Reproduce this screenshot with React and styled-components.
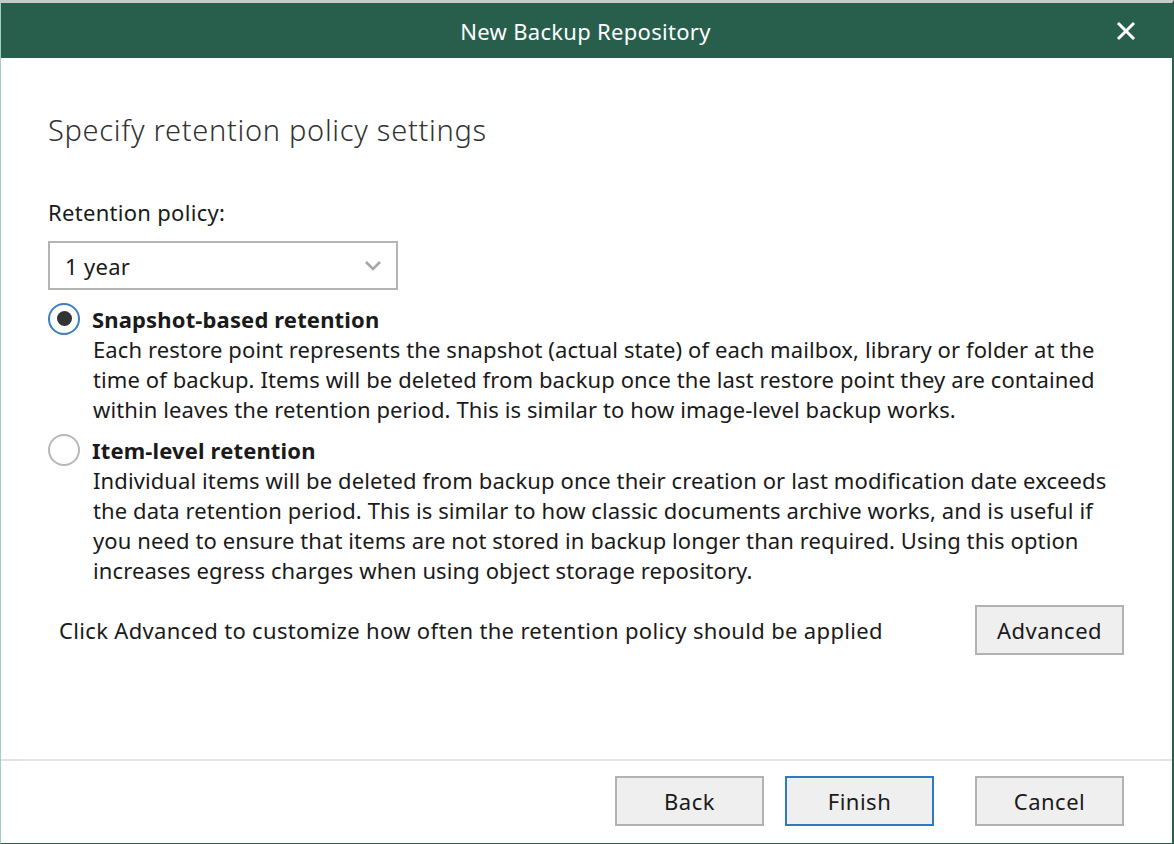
import React from 'react';
import styled, { createGlobalStyle } from 'styled-components';

const GlobalStyle = createGlobalStyle`
  html, body {
    margin: 0;
    padding: 0;
    background: #ffffff;
  }
  * { box-sizing: border-box; }
`;

const snapshotLines = [
  'Each restore point represents the snapshot (actual state) of each mailbox, library or folder at the',
  'time of backup. Items will be deleted from backup once the last restore point they are contained',
  'within leaves the retention period. This is similar to how image-level backup works.',
];

const itemLines = [
  'Individual items will be deleted from backup once their creation or last modification date exceeds',
  'the data retention period. This is similar to how classic documents archive works, and is useful if',
  'you need to ensure that items are not stored in backup longer than required. Using this option',
  'increases egress charges when using object storage repository.',
];

const CloseIcon = () => (
  <svg width="20" height="20" viewBox="0 0 20 20">
    <path d="M3 3 L17 17 M17 3 L3 17" stroke="#ffffff" strokeWidth="3" strokeLinecap="square" />
  </svg>
);

const Chevron = () => (
  <svg width="18" height="12" viewBox="0 0 18 12">
    <path d="M2 2 L9 9 L16 2" fill="none" stroke="#a6a6a6" strokeWidth="2.6" />
  </svg>
);

const Option = ({ checked, title, lines }) => (
  <OptionBlock>
    <OptionHead>
      <Radio checked={checked} />
      <OptionTitle>{title}</OptionTitle>
    </OptionHead>
    <OptionText>
      {lines.map((l) => (
        <Line key={l}>{l}</Line>
      ))}
    </OptionText>
  </OptionBlock>
);

const App = () => (
  <>
    <GlobalStyle />
    <Window>
      <TitleBar>
        <Title>New Backup Repository</Title>
        <CloseButton>
          <CloseIcon />
        </CloseButton>
      </TitleBar>
      <Body>
        <Heading>Specify retention policy settings</Heading>
        <Label>Retention policy:</Label>
        <Select>
          <span>1 year</span>
          <Chevron />
        </Select>
        <Option checked title="Snapshot-based retention" lines={snapshotLines} />
        <Option title="Item-level retention" lines={itemLines} />
        <AdvancedRow>
          <Hint>Click Advanced to customize how often the retention policy should be applied</Hint>
          <Button>Advanced</Button>
        </AdvancedRow>
      </Body>
      <Footer>
        <Button>Back</Button>
        <Button primary>Finish</Button>
        <Button wide>Cancel</Button>
      </Footer>
    </Window>
  </>
);

const Window = styled.div`
  width: 1174px;
  height: 844px;
  display: flex;
  flex-direction: column;
  border-top: 3px solid #c9c9c9;
  border-left: 1px solid #a3cfc0;
  border-right: 2px solid #2b5f4d;
  border-bottom: 1px solid #2b5f4d;
  font-family: 'Noto Sans', 'Open Sans', sans-serif;
  color: #1a1a1a;
  background: #ffffff;
`;

const TitleBar = styled.div`
  position: relative;
  height: 55px;
  flex-shrink: 0;
  background: #285e4c;
  display: flex;
  align-items: center;
  justify-content: center;
`;

const Title = styled.div`
  color: #ffffff;
  font-size: 22px;
  letter-spacing: 0.3px;
  margin-right: 2px;
`;

const CloseButton = styled.div`
  position: absolute;
  right: 36px;
  top: 18px;
  width: 20px;
  height: 20px;
  display: flex;
`;

const Body = styled.div`
  flex: 1;
  padding: 54px 0 0 47px;
  display: flex;
  flex-direction: column;
`;

const Heading = styled.div`
  font-size: 29px;
  line-height: 36px;
  font-weight: 300;
  color: #333333;
  letter-spacing: 0.7px;
`;

const Label = styled.div`
  margin-top: 51px;
  font-size: 22px;
  line-height: 26px;
  letter-spacing: 0.3px;
`;

const Select = styled.div`
  margin-top: 16px;
  width: 350px;
  height: 49px;
  border: 2px solid #b4b4b4;
  display: flex;
  align-items: center;
  justify-content: space-between;
  padding: 0 14px 0 15px;
  font-size: 22px;
  letter-spacing: 0.3px;
`;

const OptionBlock = styled.div`
  display: flex;
  flex-direction: column;
  margin-top: 13px;
  & + & {
    margin-top: 10px;
  }
`;

const OptionHead = styled.div`
  display: flex;
  align-items: center;
  height: 31px;
  gap: 12px;
`;

const Radio = styled.div`
  width: 32px;
  height: 32px;
  border-radius: 50%;
  border: 2px solid ${(p) => (p.checked ? '#3d7fbf' : '#b8b8b8')};
  display: flex;
  align-items: center;
  justify-content: center;
  &::after {
    content: '';
    width: 15px;
    height: 15px;
    border-radius: 50%;
    background: ${(p) => (p.checked ? '#333333' : 'transparent')};
  }
`;

const OptionTitle = styled.div`
  font-size: 22px;
  font-weight: 700;
  letter-spacing: 0.15px;
`;

const OptionText = styled.div`
  padding-left: 45px;
  font-size: 22px;
  line-height: 30px;
  letter-spacing: 0.1px;
`;

const Line = styled.div`
  white-space: nowrap;
`;

const AdvancedRow = styled.div`
  margin-top: 20px;
  display: flex;
  align-items: center;
  justify-content: space-between;
  padding: 0 48px 0 11px;
`;

const Hint = styled.div`
  font-size: 22px;
  letter-spacing: 0.33px;
`;

const Footer = styled.div`
  height: 84px;
  flex-shrink: 0;
  border-top: 2px solid #e3e3e3;
  display: flex;
  align-items: center;
  justify-content: flex-end;
  padding: 0 48px 3px 0;
  gap: 21px;
`;

const Button = styled.button`
  width: 149px;
  height: 50px;
  background: #efefef;
  border: 2px solid ${(p) => (p.primary ? '#2f78c4' : '#b2b2b2')};
  font-family: 'Noto Sans', 'Open Sans', sans-serif;
  font-size: 22px;
  letter-spacing: 0.5px;
  color: #1a1a1a;
  padding: 0;
  margin-left: ${(p) => (p.wide ? '20px' : '0')};
`;

export default App;
